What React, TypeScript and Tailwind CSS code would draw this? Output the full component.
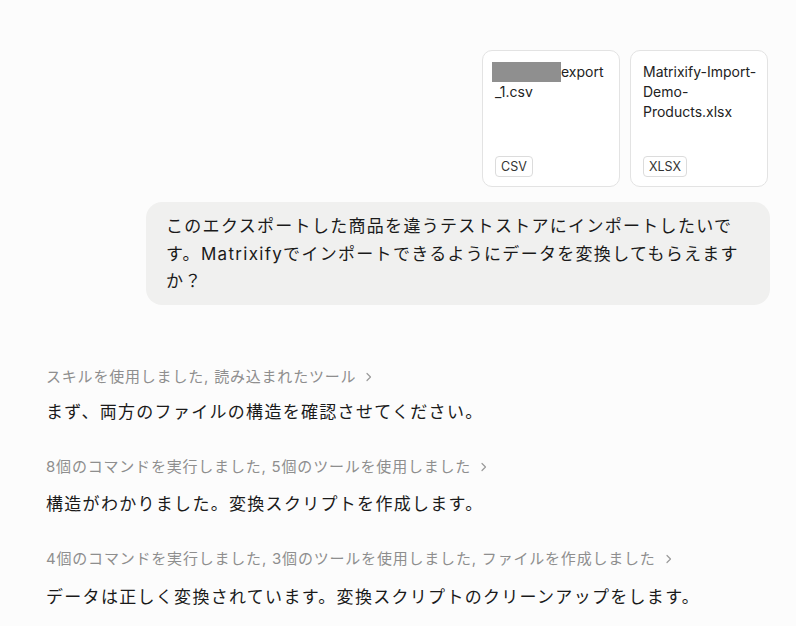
import React from "react";

const font = { fontFamily: '"Inter", "Noto Sans CJK JP", sans-serif' };

function Chevron() {
  return (
    <svg width="8" height="10" viewBox="0 0 8 10" className="inline-block ml-[9px] mb-[1px]" fill="none">
      <path d="M2 1.5 L5.5 5 L2 8.5" stroke="#9a9a9a" strokeWidth="1.2" strokeLinecap="round" strokeLinejoin="round" />
    </svg>
  );
}

function FileCard({ children, ext }: { children: React.ReactNode; ext: string }) {
  return (
    <div className="w-[138px] h-[137px] rounded-[10px] border border-[#e3e3e3] bg-white px-3 pt-[11px] pb-[9px] flex flex-col justify-between">
      <div className="text-[14px] leading-[20px] text-[#222] whitespace-nowrap">{children}</div>
      <div>
        <span className="inline-block rounded-[4px] border border-[#dcdcdc] bg-white px-[5px] h-[21px] leading-[19px] text-[12.5px] text-[#333]">
          {ext}
        </span>
      </div>
    </div>
  );
}

export default function App() {
  return (
    <div className="w-full min-h-[626px] bg-[#fcfcfc] text-[#1a1a1a]" style={font}>
      <div className="pt-[50px] pr-[26px] flex flex-col items-end">
        <div className="flex gap-[10px] mr-[2px]">
          <FileCard ext="CSV">
            <span className="inline-block w-[69px] h-[20px] bg-[#8f8f8f] align-top -ml-[3px]"></span>
            export
            <br />
            _1.csv
          </FileCard>
          <FileCard ext="XLSX">
            Matrixify-Import-
            <br />
            Demo-
            <br />
            Products.xlsx
          </FileCard>
        </div>
        <div className="mt-[15px] w-[624px] rounded-[16px] bg-[#f0f0ef] pl-5 pr-4 pt-[11px] pb-[9px] text-[17px] leading-[27.5px] tracking-[1.3px]">
          このエクスポートした商品を違うテストストアにインポートしたいです。Matrixifyでインポートできるようにデータを変換してもらえますか？
        </div>
      </div>
      <div className="pl-[46px] pt-[60px]">
        <div className="text-[15px] leading-[24px] text-[#8e8e8e] tracking-[0.8px]">
          スキルを使用しました, 読み込まれたツール<Chevron />
        </div>
        <div className="mt-[9px] text-[17px] leading-[28px] tracking-[1.3px]">
          まず、両方のファイルの構造を確認させてください。
        </div>
        <div className="mt-[29px] text-[15px] leading-[24px] text-[#8e8e8e] tracking-[0.8px]">
          8個のコマンドを実行しました, 5個のツールを使用しました<Chevron />
        </div>
        <div className="mt-[11px] text-[17px] leading-[28px] tracking-[1.3px]">
          構造がわかりました。変換スクリプトを作成します。
        </div>
        <div className="mt-[29px] text-[15px] leading-[24px] text-[#8e8e8e] tracking-[0.8px]">
          4個のコマンドを実行しました, 3個のツールを使用しました, ファイルを作成しました<Chevron />
        </div>
        <div className="mt-[12px] text-[17px] leading-[28px] tracking-[1.3px]">
          データは正しく変換されています。変換スクリプトのクリーンアップをします。
        </div>
      </div>
    </div>
  );
}
